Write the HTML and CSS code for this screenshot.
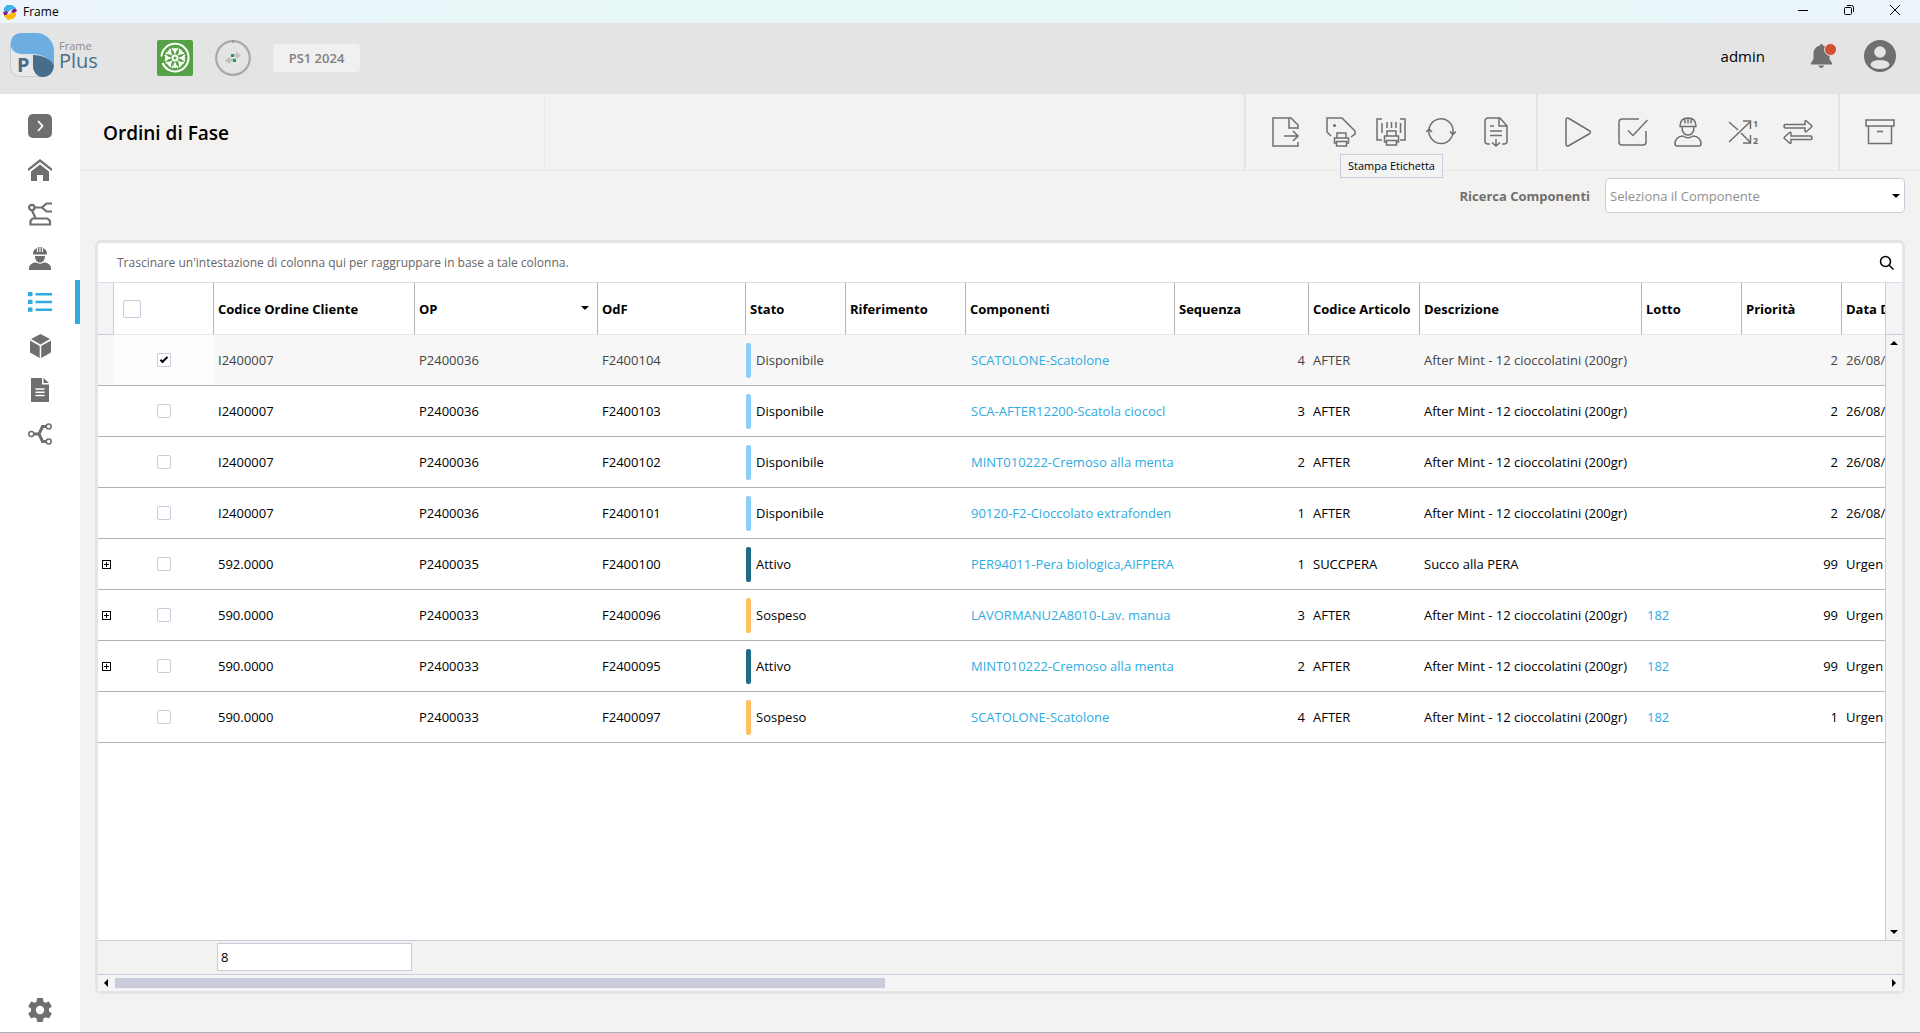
FILE: index.html
```html
<!DOCTYPE html>
<html lang="it">
<head>
  <meta charset="UTF-8" />
  <meta name="viewport" content="width=device-width, initial-scale=1.0" />
  <title>Frame</title>
  <link rel="stylesheet" href="styles.css">
</head>
<body>
  <!-- Window title bar -->
  <div class="titlebar">
    <svg class="app-icon" width="16" height="16" viewBox="0 0 16 16">
      <path d="M2 7V4l3-3h5l4 3v2l-4-1-4 3z" fill="#3db2ea"/>
      <path d="M14 9v3l-3 3-5 1-4-4v-2l4 1 4-3z" fill="#fbbc09"/>
      <path d="M1 8l3-1 2 1-1 3H2zM15 7l-1-2-3 0-2 3 3 1z" fill="#8b1a8b"/>
    </svg>
    <span class="titlebar-text">Frame</span>
    <div class="window-buttons">
      <button aria-label="Riduci"><svg width="12" height="12" viewBox="0 0 12 12"><path d="M1 6.500h10"/></svg></button>
      <button aria-label="Ripristina"><svg width="12" height="12" viewBox="0 0 12 12"><rect x="1.500" y="3.500" width="7" height="7" rx="1"/><path d="M4 1.500h4.500a2 2 0 0 1 2 2V8"/></svg></button>
      <button aria-label="Chiudi"><svg width="12" height="12" viewBox="0 0 12 12"><path d="M1 1l10 10M11 1L1 11"/></svg></button>
    </div>
  </div>

  <header class="header">
    <div class="logo">
      <svg width="44" height="44" viewBox="0 0 44 44">
        <path d="M.5 12v22a9.500 9.500 0 0 0 9.500 9.500h24" fill="#e9e9e9" stroke="#c3cad0"/>
        <path d="M11 0h15a18 18 0 0 1 18 18v16C40 25 32 21 22 21H11A10.500 10.500 0 0 1 11 0z" fill="#6cade2"/>
        <path d="M23 22c10 0 18 4 21 11-1 7-5 11-11 11-6 0-10-5-10-11z" fill="#486d8b"/>
        <text x="7" y="39" class="logo-p">P</text>
      </svg>
      <div class="logo-name"><span>Frame</span><strong>Plus</strong></div>
    </div>

    <button class="plant" aria-label="Impianto">
      <svg width="36" height="36" viewBox="0 0 36 36" fill="none" stroke="#fff" stroke-width="2">
        <path d="M4.500 16.500a13.500 13.500 0 0 1 27 1.500 13.500 13.500 0 0 1-26 5"/>
        <circle cx="18" cy="18" r="2.500"/>
        <path id="vein" d="M18 13.500V8M15 8l3 3.500L21 8" stroke-width="1.800"/>
        <use href="#vein" transform="rotate(45 18 18)"/>
        <use href="#vein" transform="rotate(90 18 18)"/>
        <use href="#vein" transform="rotate(135 18 18)"/>
        <use href="#vein" transform="rotate(180 18 18)"/>
        <use href="#vein" transform="rotate(225 18 18)"/>
        <use href="#vein" transform="rotate(270 18 18)"/>
        <use href="#vein" transform="rotate(315 18 18)"/>
      </svg>
    </button>
    <svg class="sync" width="36" height="36" viewBox="0 0 36 36">
      <circle cx="18" cy="18" r="16.800" fill="none" stroke="#a9a9a9" stroke-width="2.200"/>
      <path d="M18 0v3" stroke="#4bb04f"/>
      <path d="M16 14.500h5V12l5 3.500-5 3.500v-2.500h-5zM20 18.500v3h-5V24l-5-3.500 5-3.500v1.500z" fill="#bdbdbd"/>
      <path d="M16 14h3v3h-3zM18 19h3v3h-3z" fill="#1fa34a"/>
    </svg>
    <button class="period">PS1 2024</button>

    <div class="user">
      <span class="user-name">admin</span>
      <button class="bell" aria-label="Notifiche">
        <svg width="26" height="26" viewBox="0 0 26 26">
          <path d="M11.500 1c1 0 1.500.7 1.500 1.600 4 1 6.500 4 6.500 8v5.400l2.500 4v1.500H1V20l2.500-4v-5.400c0-4 2.500-7 6.500-8C10 1.700 10.500 1 11.500 1zM8.500 22.500h5.500c-.3 1.500-1.300 2.500-2.700 2.500s-2.500-1-2.800-2.500z" fill="#6f6f6f"/>
          <circle cx="20.500" cy="6.500" r="6" fill="#d0502f" stroke="#e4e4e4"/>
        </svg>
      </button>
      <button class="avatar" aria-label="Profilo">
        <svg width="32" height="32" viewBox="0 0 32 32">
          <circle cx="16" cy="16" r="16" fill="#6f6f6f"/>
          <circle cx="16" cy="12" r="5.800" fill="#e4e4e4"/>
          <ellipse cx="16" cy="24.500" rx="9.500" ry="4.500" fill="#e4e4e4"/>
        </svg>
      </button>
    </div>
  </header>

  <div class="layout">
    <nav class="sidebar">
      <a href="#" aria-label="Espandi"><svg viewBox="0 0 24 24"><rect width="24" height="24" rx="5"/><path d="M10 7l4.500 5-4.500 5" fill="none" stroke="#fff" stroke-width="1.800"/></svg></a>
      <a href="#" aria-label="Home"><svg viewBox="0 0 24 24"><path d="M12 1l12 9.500v2.800L12 4 0 13.300v-2.800zM12 6.500l9 7V23h-6v-6H9v6H3v-9.500z"/></svg></a>
      <a href="#" aria-label="Macchine"><svg viewBox="0 0 24 24"><g fill="none" stroke="#6f6f6f" stroke-width="2.200"><circle cx="3.800" cy="5.500" r="2.700"/><path d="M6.500 5.500h8M4 8.500l3.500 7.500M24 1.500h-5.500L14 5.500l4.500 4H24M2.500 22.500v-3.500l2-2.500h15l2.500 2.500v3.500z"/></g></svg></a>
      <a href="#" aria-label="Operatori"><svg viewBox="0 0 24 24"><path d="M5 8c0-3 1.300-5 4-6v4h1V1h1.400v5h1.200V1H14v5h1V2c2.700 1 4 3 4 6v.500H5zM7 10h10c0 4-2 6.500-5 6.500S7 14 7 10zM1 24v-2c0-3 3-5.500 7-5.500 2.500 1.500 5.500 1.500 8 0 4 0 7 2.500 7 5.500v2z"/></svg></a>
      <a href="#" class="active" aria-label="Ordini di fase"><svg viewBox="0 0 24 24"><path d="M0 2h4.500v4.300H0zM7.500 3H24v2.500H7.500zM0 9.800h4.500V14H0zM7.500 10.800H24v2.500H7.500zM0 17.500h4.500v4.300H0zM7.500 18.500H24V21H7.500z"/></svg></a>
      <a href="#" aria-label="Magazzino"><svg viewBox="0 0 24 24"><path d="M12.500 0L22 5 12.500 10.500 3 5zM2 6.500l9.700 5.500v12L2 18.500zM23 6.500V18.500L13.200 24V12z"/></svg></a>
      <a href="#" aria-label="Documenti"><svg viewBox="0 0 24 24"><path d="M3 0h11v6.500h7V24H3z"/><path d="M15.500 0L21 5h-5.500z"/><path d="M7.500 11h9M7.500 14.300h9M7.500 17.500h9" stroke="#fff" stroke-width="1.500"/></svg></a>
      <a href="#" aria-label="Flussi"><svg viewBox="0 0 24 24"><g fill="none" stroke="#6f6f6f" stroke-width="1.500"><circle cx="3.300" cy="12" r="2.500"/><circle cx="20.700" cy="4.500" r="2.500"/><circle cx="20.700" cy="19.500" r="2.500"/><path d="M6 12h5M18 4.500h-3.500L11 12l3.500 7.500H18" stroke-width="3"/></g></svg></a>
      <a href="#" class="settings" aria-label="Impostazioni"><svg viewBox="2 2 20 20"><path d="M19.430 12.980c.04-.32.07-.64.07-.98s-.03-.66-.07-.98l2.110-1.650c.19-.15.24-.42.12-.64l-2-3.460c-.12-.22-.39-.3-.61-.22l-2.490 1c-.52-.4-1.080-.73-1.690-.98l-.38-2.650C14.460 2.180 14.250 2 14 2h-4c-.25 0-.46.18-.49.42l-.38 2.650c-.61.25-1.170.59-1.690.98l-2.490-1c-.23-.09-.49 0-.61.22l-2 3.460c-.13.22-.07.49.12.64l2.110 1.650c-.04.32-.07.65-.07.98s.03.66.07.98l-2.110 1.650c-.19.15-.24.42-.12.64l2 3.460c.12.22.39.3.61.22l2.490-1c.52.4 1.080.73 1.690.98l.38 2.650c.03.24.24.42.49.42h4c.25 0 .46-.18.49-.42l.38-2.650c.61-.25 1.170-.59 1.690-.98l2.490 1c.23.09.49 0 .61-.22l2-3.460c.12-.22.07-.49-.12-.64zM12 15.500a3.500 3.500 0 1 1 0-7 3.500 3.500 0 0 1 0 7z"/></svg></a>
    </nav>

    <main class="content">
      <div class="toolbar">
        <h1>Ordini di Fase</h1>
        <div class="tool-group tool-group-first">
          <button aria-label="Esporta"><svg viewBox="0 0 30 30"><path d="M27 12V8l-7-7H2v28h25v-4M18 1v10h9M13 19h14M22 14l5 5-5 5"/></svg></button>
          <div class="tool-subgroup">
            <div class="has-tip">
              <button aria-label="Stampa Etichetta"><svg viewBox="0 0 30 30"><path d="M5 19l-4-4V1h15l13 13v3l-4 3"/><circle cx="8.500" cy="8.500" r=".8"/><path d="M11 21V16h9v5M11 26H8.500v-5h14v5H20M10.500 24.500h10V29h-10z"/></svg></button>
              <span class="tip" role="tooltip">Stampa Etichetta</span>
            </div>
            <button aria-label="Stampa codice a barre"><svg viewBox="0 0 30 30"><path d="M6 2H1v21h5M24 2h5v21h-5M6 6v10M11 5v6M15.500 5v6M20 5v6M24.500 6v10M11 19v-5h9v5M11 25H8.500v-6h14v6H20M10.500 23.500h10V28h-10z"/></svg></button>
            <button aria-label="Aggiorna"><svg viewBox="0 0 30 30"><path d="M3 16A12 12 0 0 1 27 12v4M27 15A12 12 0 0 1 3.500 18M3 18v-5M0 15l3-3 3 3M24 14.500l3 3 3-3"/></svg></button>
          </div>
          <button aria-label="Scarica documento"><svg viewBox="0 0 30 30"><path d="M9 27H7a3 3 0 0 1-3-3V4a3 3 0 0 1 3-3h12l7 8v15a3 3 0 0 1-3 3h-2M18 1v8h8M9 9h4M9 14h12M9 18.500h12M15 22v7M11 25.500l4 3.500 4-3.500"/></svg></button>
        </div>
        <div class="tool-group">
          <button aria-label="Avvia"><svg viewBox="0 0 30 30"><path d="M3 3v24c0 2 1 2.500 3 1.500l20-11.500c2-1 2-2.500 0-3.500L6 1.500C4 .5 3 1 3 3z"/></svg></button>
          <button aria-label="Completa"><svg viewBox="0 0 30 30"><path d="M21 2H4a3 3 0 0 0-3 3v20a3 3 0 0 0 3 3h21a3 3 0 0 0 3-3V14M10 13.500l5 5L29.500 3"/></svg></button>
          <button aria-label="Assegna operatore"><svg viewBox="0 0 30 30"><path d="M7 9.500C7 4 10 1 15 1s8 3 8 8.500zM12 1.500v5M15 1v5.500M18 1.500v5M9 9.500c0 5 2 8.500 6 8.500s6-3.500 6-8.500M10 19c3.500 2.500 6.500 2.500 10 0 5 0 8 3.500 8 8 0 1.200-.8 2-2 2H4c-1.200 0-2-.8-2-2 0-4.500 3-8 8-8z"/></svg></button>
          <button aria-label="Riordina"><svg viewBox="0 0 30 30"><path d="M1 5l9 8M1 25L22 5M15 4h7.500v8M13 16l9 9M15 26h7.500v-8"/><text x="25" y="10">1</text><text x="25" y="27">2</text></svg></button>
          <button aria-label="Scambia"><svg viewBox="0 0 30 30"><path d="M2 7.500h20V4.500c0-1 1-1 1.500-.5l5 4.500c.6.600.6 1 0 1.500l-5 4.500c-.5.500-1.500.5-1.500-.5v-3H2c-1.300 0-1.300-3.500 0-3.500zM28 19H8v-3c0-1-1-1-1.500-.5l-5 4.500c-.6.600-.6 1 0 1.500l5 4.500c.5.500 1.500.5 1.500-.5v-3h20c1.300 0 1.300-3.500 0-3.500z"/></svg></button>
        </div>
        <div class="tool-group">
          <button aria-label="Archivio"><svg viewBox="0 0 30 30"><path d="M1 3h28v6H1zM3.500 9v17.500h23V9M12 14.500h6"/></svg></button>
        </div>
      </div>

      <div class="search-row">
        <label for="component">Ricerca Componenti</label>
        <div class="combo">
          <select id="component">
            <option>Seleziona il Componente</option>
          </select>
        </div>
      </div>

      <section class="grid">
        <div class="group-panel">
          <span>Trascinare un'intestazione di colonna qui per raggruppare in base a tale colonna.</span>
          <button aria-label="Cerca"><svg width="16" height="16" viewBox="0 0 16 16"><circle cx="6.500" cy="6.500" r="5"/><path d="M10 10l4.500 4.500"/></svg></button>
        </div>

        <div class="grid-body">
          <div class="viewport">
            <table>
              <colgroup>
                <col class="w-ind"><col class="w-100"><col class="w-client"><col class="w-op"><col class="w-odf">
                <col class="w-100"><col class="w-ref"><col class="w-comp"><col class="w-seq"><col class="w-art">
                <col class="w-desc"><col class="w-100"><col class="w-100"><col class="w-100">
              </colgroup>
              <thead>
                <tr>
                  <th class="ind"></th>
                  <th class="check"><input type="checkbox" aria-label="Seleziona tutti"></th>
                  <th>Codice Ordine Cliente</th>
                  <th class="sorted">OP</th>
                  <th>OdF</th>
                  <th>Stato</th>
                  <th>Riferimento</th>
                  <th>Componenti</th>
                  <th>Sequenza</th>
                  <th>Codice Articolo</th>
                  <th>Descrizione</th>
                  <th>Lotto</th>
                  <th>Priorità</th>
                  <th>Data D</th>
                </tr>
              </thead>
              <tbody>
                <tr class="selected">
                  <td class="ind"></td>
                  <td class="check"><input type="checkbox" aria-label="F2400104" checked></td>
                  <td>I2400007</td><td>P2400036</td><td>F2400104</td>
                  <td class="state available">Disponibile</td><td></td>
                  <td class="link"><a href="#">SCATOLONE-Scatolone</a></td>
                  <td class="num">4</td><td>AFTER</td><td>After Mint - 12 cioccolatini (200gr)</td>
                  <td></td><td class="num">2</td><td>26/08/</td>
                </tr>
                <tr>
                  <td class="ind"></td>
                  <td class="check"><input type="checkbox" aria-label="F2400103"></td>
                  <td>I2400007</td><td>P2400036</td><td>F2400103</td>
                  <td class="state available">Disponibile</td><td></td>
                  <td class="link"><a href="#">SCA-AFTER12200-Scatola ciococl</a></td>
                  <td class="num">3</td><td>AFTER</td><td>After Mint - 12 cioccolatini (200gr)</td>
                  <td></td><td class="num">2</td><td>26/08/</td>
                </tr>
                <tr>
                  <td class="ind"></td>
                  <td class="check"><input type="checkbox" aria-label="F2400102"></td>
                  <td>I2400007</td><td>P2400036</td><td>F2400102</td>
                  <td class="state available">Disponibile</td><td></td>
                  <td class="link"><a href="#">MINT010222-Cremoso alla menta</a></td>
                  <td class="num">2</td><td>AFTER</td><td>After Mint - 12 cioccolatini (200gr)</td>
                  <td></td><td class="num">2</td><td>26/08/</td>
                </tr>
                <tr>
                  <td class="ind"></td>
                  <td class="check"><input type="checkbox" aria-label="F2400101"></td>
                  <td>I2400007</td><td>P2400036</td><td>F2400101</td>
                  <td class="state available">Disponibile</td><td></td>
                  <td class="link"><a href="#">90120-F2-Cioccolato extrafonden</a></td>
                  <td class="num">1</td><td>AFTER</td><td>After Mint - 12 cioccolatini (200gr)</td>
                  <td></td><td class="num">2</td><td>26/08/</td>
                </tr>
                <tr>
                  <td class="ind"><button class="expand" aria-label="Espandi"></button></td>
                  <td class="check"><input type="checkbox" aria-label="F2400100"></td>
                  <td>592.0000</td><td>P2400035</td><td>F2400100</td>
                  <td class="state running">Attivo</td><td></td>
                  <td class="link"><a href="#">PER94011-Pera biologica,AIFPERA</a></td>
                  <td class="num">1</td><td>SUCCPERA</td><td>Succo alla PERA</td>
                  <td></td><td class="num">99</td><td>Urgen</td>
                </tr>
                <tr>
                  <td class="ind"><button class="expand" aria-label="Espandi"></button></td>
                  <td class="check"><input type="checkbox" aria-label="F2400096"></td>
                  <td>590.0000</td><td>P2400033</td><td>F2400096</td>
                  <td class="state paused">Sospeso</td><td></td>
                  <td class="link"><a href="#">LAVORMANU2A8010-Lav. manua</a></td>
                  <td class="num">3</td><td>AFTER</td><td>After Mint - 12 cioccolatini (200gr)</td>
                  <td class="link"><a href="#">182</a></td><td class="num">99</td><td>Urgen</td>
                </tr>
                <tr>
                  <td class="ind"><button class="expand" aria-label="Espandi"></button></td>
                  <td class="check"><input type="checkbox" aria-label="F2400095"></td>
                  <td>590.0000</td><td>P2400033</td><td>F2400095</td>
                  <td class="state running">Attivo</td><td></td>
                  <td class="link"><a href="#">MINT010222-Cremoso alla menta</a></td>
                  <td class="num">2</td><td>AFTER</td><td>After Mint - 12 cioccolatini (200gr)</td>
                  <td class="link"><a href="#">182</a></td><td class="num">99</td><td>Urgen</td>
                </tr>
                <tr>
                  <td class="ind"></td>
                  <td class="check"><input type="checkbox" aria-label="F2400097"></td>
                  <td>590.0000</td><td>P2400033</td><td>F2400097</td>
                  <td class="state paused">Sospeso</td><td></td>
                  <td class="link"><a href="#">SCATOLONE-Scatolone</a></td>
                  <td class="num">4</td><td>AFTER</td><td>After Mint - 12 cioccolatini (200gr)</td>
                  <td class="link"><a href="#">182</a></td><td class="num">1</td><td>Urgen</td>
                </tr>
              </tbody>
            </table>
          </div>
          <div class="vscroll">
            <div class="vscroll-head"></div>
            <button class="arrow up" aria-label="Su"></button>
            <button class="arrow down" aria-label="Giù"></button>
          </div>
        </div>

        <div class="summary">
          <input type="text" value="8" aria-label="Numero ordini" readonly>
        </div>
        <div class="hscroll">
          <button class="arrow left" aria-label="Sinistra"></button>
          <div class="track"><div class="thumb"></div></div>
          <button class="arrow right" aria-label="Destra"></button>
        </div>
      </section>
    </main>
  </div>
</body>
</html>
```

FILE: styles.css
```css
:root {
  --bg: #f3f2f0;
  --bar: #e4e4e4;
  --icon: #6f6f6f;
  --line: #cbccdb;
  --blue: #2eace2;
}
*, *::before, *::after { box-sizing: border-box; }
html, body { height: 100%; margin: 0; }
body {
  display: flex;
  flex-direction: column;
  background: var(--bg);
  color: #000;
  font-family: "Open Sans", "Noto Sans", sans-serif;
  font-size: 13px;
  line-height: 18px;
  border-bottom: 1px solid #a5b2ba;
  overflow: hidden;
}
button {
  display: block;
  padding: 0;
  border: none;
  background: none;
  font: inherit;
  cursor: pointer;
}
svg { display: block; }

/* ── Title bar ── */
.titlebar {
  display: flex;
  align-items: center;
  flex: none;
  height: 23px;
  padding: 0 19px 0 2px;
  background: linear-gradient(90deg, #ebf5fb, #e6f7f6 45%, #e6f7f6 70%, #ebf5fb);
}
.titlebar-text { margin-left: 5px; font-size: 12px; }
.window-buttons { display: flex; gap: 34px; margin-left: auto; padding-bottom: 3px; }
.window-buttons svg { fill: none; stroke: #000; }

/* ── Header ── */
.header {
  display: flex;
  align-items: center;
  flex: none;
  height: 71px;
  padding: 0 24px 2px 10px;
  background: var(--bar);
}
.logo { display: flex; gap: 5px; width: 147px; padding-bottom: 6px; }
.logo-p { font: bold 20px "Noto Sans", sans-serif; fill: #486d8b; }
.logo-name { display: flex; flex-direction: column; padding-top: 6px; color: #8a8a8a; font-size: 11px; line-height: 14px; }
.logo-name strong { color: #486d8b; font-size: 20px; font-weight: 400; line-height: 16px; }
.plant { border-radius: 2px; background: #55a245; }
.sync { margin: 0 22px; }
.period {
  width: 87px;
  height: 28px;
  border-radius: 4px;
  background: #f0f0f0;
  color: #808080;
  font-weight: 600;
}
.user { display: flex; align-items: center; margin-left: auto; padding-bottom: 4px; }
.user-name { margin-right: 45px; font-size: 15px; }
.bell { margin-right: 28px; }

/* ── Sidebar ── */
.layout { display: flex; flex: 1; min-height: 0; }
.sidebar {
  display: flex;
  flex-direction: column;
  flex: none;
  width: 80px;
  padding-top: 10px;
  background: #fff;
}
.sidebar a { display: flex; align-items: center; justify-content: center; height: 44px; }
.sidebar svg { width: 24px; height: 24px; fill: var(--icon); }
.sidebar .active { border-right: 5px solid var(--blue); padding-left: 5px; }
.sidebar .active svg { fill: var(--blue); }
.sidebar .settings { margin-top: auto; }

/* ── Toolbar ── */
.content { display: flex; flex-direction: column; flex: 1; min-width: 0; }
.toolbar {
  display: flex;
  flex: none;
  height: 77px;
  border-bottom: 1px solid #e8e8e8;
}
h1 {
  width: 465px;
  margin: 0;
  padding-left: 23px;
  border-right: 1px solid #e8e8e8;
  font-size: 19px;
  font-weight: 600;
  line-height: 78px;
}
.tool-group {
  display: flex;
  align-items: center;
  gap: 25px;
  padding: 0 25px;
  border-left: 2px solid var(--bar);
}
.tool-group-first { margin-left: auto; }
.tool-subgroup { display: flex; gap: 20px; }
.tool-group svg {
  width: 30px;
  height: 30px;
  fill: none;
  stroke: var(--icon);
  stroke-width: 1.5;
}
.tool-group text { font-size: 9px; font-weight: 700; fill: var(--icon); stroke: none; }
.has-tip { position: relative; }
.tip {
  position: absolute;
  top: 37px;
  left: 14px;
  z-index: 1;
  width: 103px;
  border: 1px solid var(--line);
  background: #f3f3f4;
  font-size: 11px;
  line-height: 22px;
  text-align: center;
  white-space: nowrap;
}

/* ── Component search ── */
.search-row {
  display: flex;
  align-items: center;
  justify-content: flex-end;
  gap: 15px;
  flex: none;
  padding: 7px 15px 27px;
}
.search-row label { color: var(--icon); font-weight: 700; }
.combo { position: relative; width: 300px; }
.combo select {
  display: block;
  appearance: none;
  width: 100%;
  height: 35px;
  padding: 0 4px;
  border: 1px solid var(--line);
  border-radius: 4px;
  background: #fff;
  color: #8f8f8f;
  font: inherit;
}
.combo::after {
  content: "";
  position: absolute;
  top: 16px;
  right: 5px;
  border: 4px solid transparent;
  border-top-color: #000;
  border-bottom: none;
}

/* ── Grid ── */
.grid {
  display: flex;
  flex-direction: column;
  flex: 1;
  min-height: 0;
  margin: 0 15px 38px;
  border: 3px solid var(--bar);
  border-radius: 6px;
  background: #fff;
}
.group-panel {
  display: flex;
  align-items: center;
  justify-content: space-between;
  flex: none;
  height: 40px;
  padding: 0 7px 0 19px;
  border-bottom: 1px solid #dcdce8;
  color: #666;
  font-size: 12px;
}
.group-panel svg { fill: none; stroke: #000; stroke-width: 1.5; }
.grid-body { display: flex; flex: 1; min-height: 0; }
.viewport { flex: 1; min-width: 0; overflow: hidden; }

table { width: 1844px; table-layout: fixed; border-spacing: 0; }
.w-ind { width: 16px; }
.w-100 { width: 100px; }
.w-client { width: 201px; }
.w-op { width: 183px; }
.w-odf { width: 148px; }
.w-ref { width: 120px; }
.w-comp { width: 209px; }
.w-seq { width: 134px; }
.w-art { width: 111px; }
.w-desc { width: 222px; }

th, td { padding: 0 4px; overflow: hidden; text-align: left; white-space: nowrap; }
th {
  height: 52px;
  border-right: 1px solid #b4b4b4;
  border-bottom: 1px solid #e8e8e8;
  font-weight: 700;
}
td { height: 51px; border-bottom: 1px solid #b4b4b4; }
.ind { padding: 0; }
th.ind { border-color: var(--line); background: #f4f4f7; }
th.check { padding-left: 9px; }
td.check { padding-left: 43px; }
.num { text-align: right; }
.link { padding: 0 0 0 5px; }
.link a { color: var(--blue); text-decoration: none; }

.sorted { position: relative; }
.sorted::after {
  content: "";
  position: absolute;
  top: 23px;
  right: 8px;
  border: 4px solid transparent;
  border-top-color: #000;
  border-bottom: none;
}

.selected td { background: #f7f7f7; color: #444; }
.selected td.check { background: #fdfdfd; }

/* coloured marker before the status text */
.state { padding: 0; }
.state::before {
  content: "";
  display: inline-block;
  width: 5px;
  height: 35px;
  margin-right: 5px;
  border-radius: 2px;
  background: #8ccefa;
  vertical-align: -13px;
}
.running::before { background: #226b87; }
.paused::before { background: #ffc060; }

input[type="checkbox"] {
  appearance: none;
  display: grid;
  place-items: center;
  width: 14px;
  height: 14px;
  margin: 0;
  border: 1px solid var(--line);
  border-radius: 2px;
  background: #fff;
}
th input[type="checkbox"] { width: 18px; height: 18px; }
input[type="checkbox"]:checked::before {
  content: "";
  width: 8px;
  height: 4px;
  margin-bottom: 2px;
  border: solid #000;
  border-width: 0 0 2px 2px;
  transform: rotate(-45deg);
}
.expand {
  width: 9px;
  height: 9px;
  margin-left: 4px;
  border: 1px solid #000;
  background:
    linear-gradient(#000, #000) center / 5px 1px no-repeat,
    linear-gradient(#000, #000) center / 1px 5px no-repeat;
}

/* ── Scrollbars and summary ── */
.vscroll {
  display: flex;
  flex-direction: column;
  align-items: center;
  width: 17px;
  padding-bottom: 6px;
  border-left: 1px solid var(--line);
  background: #f4f4f7;
}
.vscroll-head { width: 100%; height: 52px; margin-bottom: 6px; border-bottom: 1px solid var(--line); }
.arrow { width: 0; height: 0; border: 4px solid transparent; }
.up { border-top: none; border-bottom-color: #000; }
.down { margin-top: auto; border-bottom: none; border-top-color: #000; }
.left { border-left: none; border-right-color: #000; }
.right { border-right: none; border-left-color: #000; }

.summary {
  flex: none;
  padding: 2px 0 3px 119px;
  border: solid var(--line);
  border-width: 1px 0;
  background: var(--bg);
}
.summary input {
  display: block;
  width: 195px;
  height: 28px;
  padding: 0 3px;
  border: 1px solid var(--line);
  background: #fff;
  font: inherit;
}
.hscroll {
  display: flex;
  align-items: center;
  gap: 7px;
  flex: none;
  height: 16px;
  padding: 0 6px;
  background: #f4f4f7;
}
.track { flex: 1; }
.thumb { width: 43.5%; height: 10px; background: var(--line); }
```
